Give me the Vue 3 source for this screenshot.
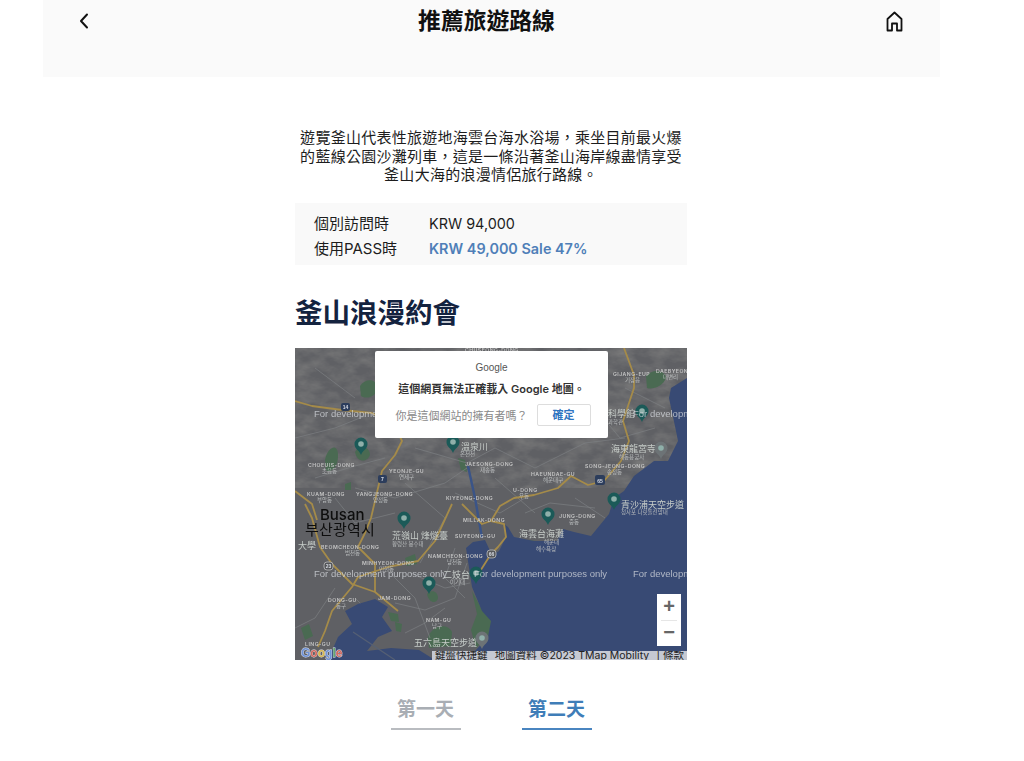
<template>
  <div class="page">
    <header class="top-bar">
      <svg class="icon" width="24" height="24" viewBox="0 0 24 24" fill="none" stroke="#111" stroke-width="2" stroke-linecap="round" stroke-linejoin="round">
        <path d="M15 5.5 L9 12 L15 18.5" />
      </svg>
      <h1 class="title">推薦旅遊路線</h1>
      <svg class="icon" width="24" height="24" viewBox="0 0 24 24" fill="none" stroke="#111" stroke-width="1.8" stroke-linejoin="round">
        <path d="M5.5 10 L12.5 3.5 L19.5 10 V21.5 H15 V14.5 H10 V21.5 H5.5 Z" />
      </svg>
    </header>

    <main class="content">
      <p class="intro">遊覽釜山代表性旅遊地海雲台海水浴場，乘坐目前最火爆的藍線公園沙灘列車，這是一條沿著釜山海岸線盡情享受釜山大海的浪漫情侶旅行路線。</p>

      <div class="price-box">
        <div class="price-row">
          <span class="price-label">個別訪問時</span>
          <span class="price">KRW 94,000</span>
        </div>
        <div class="price-row">
          <span class="price-label">使用PASS時</span>
          <span class="price sale">KRW 49,000 Sale 47%</span>
        </div>
      </div>

      <h2 class="course">釜山浪漫約會</h2>

      <div class="map">
        <svg class="map-bg" width="392" height="312" viewBox="0 0 392 312">
          <defs>
            <filter id="relief" x="0" y="0" width="100%" height="100%">
              <feTurbulence type="fractalNoise" baseFrequency="0.05 0.09" numOctaves="4" seed="7" />
              <feColorMatrix values="0 0 0 0 0.2  0 0 0 0 0.2  0 0 0 0 0.2  1.6 0 0 0 -0.55" />
            </filter>
          </defs>
          <rect width="392" height="312" fill="#5f6064" />
          <rect width="392" height="140" filter="url(#relief)" />

          <!-- 緑地 -->
          <path v-for="(d, i) in greens" :key="i" :d="d" fill="#4a6a52" />

          <!-- 細い道路 -->
          <g fill="none" stroke="#7d7f82" stroke-width="0.7">
            <path v-for="(d, i) in minorRoads" :key="i" :d="d" />
          </g>

          <!-- 海 -->
          <path d="M392 30 L376 40 L374 50 L381 83 L383 93 L373 113 L359 113 L339 128 L329 143 L319 150 L314 166 L296 188 L279 184 L268 181 L262 193 L239 193 L219 189 L213 179 L209 176 L211 189 L204 203 L197 207 L190 192 L178 194 L171 200 L173 213 L177 239 L187 263 L196 273 L193 289 L180 303 L185 312 L392 312 Z" fill="#384a74" />
          <path d="M80 251 L93 259 L87 269 L97 283 L83 289 L72 303 L96 300 L124 302 L140 312 L33 312 L43 289 L57 276 L50 263 L63 256 Z" fill="#384a74" />
          <path d="M58 284 L100 312" fill="none" stroke="#566074" stroke-width="1.2" />
          <path d="M173 118 L180 150 L187 190" fill="none" stroke="#3a5488" stroke-width="2.4" />

          <!-- 幹線道路 -->
          <g fill="none" stroke="#a58b49" stroke-width="1.8" stroke-linejoin="round">
            <path v-for="(d, i) in mainRoads" :key="i" :d="d" />
          </g>

          <g class="shield">
            <rect x="46" y="55" width="9" height="8" rx="2" fill="#2c3d5c" />
            <rect x="83" y="127" width="9" height="8" rx="2" fill="#2c3d5c" />
            <rect x="300" y="127" width="10" height="10" rx="2" fill="#2c3d5c" />
            <rect x="29" y="214" width="9" height="8" rx="3" fill="#55575a" stroke="#c8c8c8" stroke-width="0.7" />
            <rect x="192" y="202" width="9" height="8" rx="3" fill="#55575a" stroke="#c8c8c8" stroke-width="0.7" />
            <text x="50.5" y="61">14</text>
            <text x="87.5" y="133">7</text>
            <text x="305" y="135">65</text>
            <text x="33.5" y="220">23</text>
            <text x="196.5" y="208">66</text>
          </g>

          <g class="district">
            <text v-for="l in districts" :key="l[0]" :x="l[1]" :y="l[2]">{{ l[0] }}</text>
          </g>
          <g class="sub-label">
            <text v-for="l in subLabels" :key="l[0]" :x="l[1]" :y="l[2]">{{ l[0] }}</text>
          </g>
          <g class="poi">
            <text v-for="l in pois" :key="l[0]" :x="l[1]" :y="l[2]">{{ l[0] }}</text>
          </g>

          <text class="city" x="25" y="172">Busan</text>
          <text class="city city-ko" x="10" y="187">부산광역시</text>

          <g v-for="(p, i) in pins" :key="i" :transform="`translate(${p[0]} ${p[1]})`">
            <path d="M0 8 C-1.5 3.5 -6.5 2 -6.5 -3 A6.5 6.5 0 1 1 6.5 -3 C6.5 2 1.5 3.5 0 8 Z" :fill="p[2] || '#1b5a58'" />
            <circle cx="0" cy="-3" r="2.8" fill="#8fb0aa" />
          </g>

          <g class="watermark">
            <text x="19" y="229">For development purposes only</text>
            <text x="179" y="229">For development purposes only</text>
            <text x="338" y="229">For developm</text>
            <text x="19" y="69">For development</text>
            <text x="338" y="69">For developm</text>
          </g>

          <text class="google-mark" x="6" y="309"><tspan fill="#6f93d8">G</tspan><tspan fill="#d56a5e">o</tspan><tspan fill="#d9b94e">o</tspan><tspan fill="#6f93d8">g</tspan><tspan fill="#66a76f">l</tspan><tspan fill="#d56a5e">e</tspan></text>
        </svg>

        <div class="zoom-ctrl">
          <span class="zoom-btn">+</span>
          <span class="zoom-line"></span>
          <span class="zoom-btn">−</span>
        </div>
        <div class="attribution">
          <span>鍵盤快捷鍵</span>
          <span>地圖資料 ©2023 TMap Mobility</span>
          <span>| 條款</span>
        </div>

        <div class="dialog">
          <div class="dialog-logo">Google</div>
          <div class="dialog-msg">這個網頁無法正確載入 Google 地圖。</div>
          <div class="dialog-row">
            <span class="dialog-q">你是這個網站的擁有者嗎？</span>
            <span class="dialog-ok">確定</span>
          </div>
        </div>
      </div>

      <div class="tabs">
        <div class="tab">第一天</div>
        <div class="tab active">第二天</div>
      </div>
    </main>
  </div>
</template>

<script setup>
const greens = [
  'M65 38 C70 30 82 30 82 40 C82 48 72 52 66 48 Z',
  'M30 112 C32 100 42 94 43 106 C44 118 36 126 31 122 Z',
  'M60 104 C64 96 74 98 75 106 C74 114 62 116 60 104 Z',
  'M163 110 L170 112 L172 124 L166 122 Z',
  'M351 28 C358 20 370 22 371 30 C368 38 358 42 352 40 Z',
  'M132 246 C136 241 143 243 143 250 C142 256 134 256 132 246 Z',
  'M93 264 L103 266 L104 274 L96 273 Z',
  'M100 274 L107 276 L106 284 L101 283 Z',
  'M177 243 L186 260 L197 274 L193 288 L181 300 L176 282 L182 266 Z',
  'M133 290 C136 278 152 274 157 284 L156 298 L134 300 Z',
  'M6 280 L14 276 L18 288 L10 292 Z',
  'M110 210 L120 206 L122 216 L112 218 Z',
  'M232 192 L250 194 L244 202 L236 200 Z',
  'M50 136 L56 134 L56 142 L50 142 Z'
]

const mainRoads = [
  'M0 53 L17 58 L47 62 L77 65 L100 78 L107 93 L100 107 L87 123 L83 140 L76 170 L70 185 L63 199 L80 216 L80 244',
  'M10 156 L17 170 L25 199 L37 216 L57 236 L80 244 L103 263',
  'M157 156 L140 193 L123 213 L93 219 L63 229 L57 239 L37 263 L30 283 L23 299',
  'M0 143 L17 156 L22 172',
  'M329 0 L339 27 L339 40 L328 73 L334 93 L326 113 L309 133 L293 137 L276 128 L263 140 L239 147 L219 150 L205 158 L196 173 L209 176 L211 189 L203 199 L196 206 L182 228',
  'M167 156 L187 176 L196 173'
]

const minorRoads = [
  'M60 140 L100 150 L150 135 L172 120',
  'M110 135 L150 170 L125 215',
  'M160 145 L205 165 L230 150',
  'M100 165 L60 175 L40 150',
  'M20 130 L60 118 L90 110',
  'M90 220 L120 250 L135 290',
  'M115 225 L150 240 L175 235',
  'M100 255 L130 262 L160 250 L172 215',
  'M110 285 L130 275 L150 260',
  'M230 165 L255 155 L300 160',
  'M280 150 L310 170',
  'M300 60 L325 90 L360 80',
  'M330 40 L370 60',
  'M120 100 L172 115 L200 100 L240 120',
  'M240 120 L290 95 L330 90',
  'M200 130 L240 165',
  'M0 90 L40 80 L70 68',
  'M20 20 L60 50',
  'M160 200 L150 230 L170 250',
  'M40 240 L20 270 L0 280',
  'M70 260 L60 250'
]

// [text, x, y]
const districts = [
  ['CHOEUIS-DONG', 13, 119],
  ['YEONJE-GU', 94, 125],
  ['KUAM-DONG', 12, 148],
  ['YANGJEONG-DONG', 61, 148],
  ['KIYEONG-DONG', 151, 152],
  ['JAESONG-DONG', 170, 118],
  ['HAEUNDAE-GU', 236, 128],
  ['U-DONG', 218, 144],
  ['SONG-JEONG-DONG', 290, 120],
  ['GIJANG-EUP', 318, 28],
  ['DAEBYEON', 361, 25],
  ['BEOMCHEON-DONG', 26, 201],
  ['MINHYEON-DONG', 67, 217],
  ['NAMCHEON-DONG', 133, 210],
  ['MILLAK-DONG', 168, 174],
  ['SUYEONG-GU', 160, 190],
  ['JUNG-DONG', 264, 170],
  ['DONG-GU', 33, 254],
  ['JAM-DONG', 83, 252],
  ['NAM-GU', 131, 274],
  ['LING-GU', 10, 298],
  ['CHUSEONG-DONG', 170, 4]
]

const subLabels = [
  ['초읍동', 27, 125],
  ['연제구', 104, 131],
  ['부암동', 22, 154],
  ['양정동', 78, 154],
  ['재송동', 185, 124],
  ['해운대구', 248, 134],
  ['우동', 224, 150],
  ['송정동', 312, 126],
  ['기장읍', 330, 34],
  ['대변리', 368, 31],
  ['범천동', 50, 207],
  ['민현동', 84, 223],
  ['남천동', 152, 216],
  ['중동', 274, 176],
  ['동구', 41, 260],
  ['남구', 137, 280],
  ['해운대', 249, 196],
  ['해수욕장', 241, 203],
  ['온천천', 165, 108],
  ['해동용궁사', 324, 111],
  ['과학관', 313, 76],
  ['황령산 봉수대', 97, 198],
  ['이기대', 155, 236],
  ['청사포 다릿돌전망대', 326, 166]
]

const pois = [
  ['溫泉川', 166, 102],
  ['科學館', 313, 69],
  ['海東龍宮寺', 316, 104],
  ['海雲台海灘', 224, 189],
  ['荒嶺山 烽燧臺', 97, 191],
  ['青沙浦天空步道', 326, 160],
  ['二妓台', 148, 230],
  ['五六島天空步道', 119, 298],
  ['大學', 3, 201]
]

// [x, y, color]
const pins = [
  [66, 99],
  [158, 97],
  [347, 66],
  [366, 103, '#6d7376'],
  [109, 173],
  [134, 238],
  [181, 228],
  [253, 169],
  [319, 154],
  [187, 293, '#6d7376']
]
</script>

<style>
html, body {
  background: #fff;
}
</style>

<style scoped>
.page {
  width: 897px;
  height: 761px;
  margin-left: 43px;
  overflow: hidden;
  font-family: Inter, "Noto Sans CJK TC", sans-serif;
  color: #1d1d1d;
}

.top-bar {
  height: 77px;
  background: #fafafa;
  display: flex;
  justify-content: space-between;
  align-items: flex-start;
  padding: 9px 34px 0 29px;
  box-sizing: border-box;
}

.title {
  margin: -1px 5px 0 0;
  font-size: 22.8px;
  line-height: 26px;
  font-weight: 700;
  color: #111;
}

.content {
  width: 392px;
  margin-left: 252px;
  padding-top: 52px;
}

.intro {
  margin: 0 0 18px;
  font-size: 15px;
  line-height: 18.5px;
  letter-spacing: 0.27px;
  text-align: center;
}

.price-box {
  background: #f9f9f9;
  height: 62px;
  padding: 8px 19px 0;
  box-sizing: border-box;
  font-size: 15px;
  line-height: 25px;
}

.price-row {
  display: flex;
}

.price-label {
  width: 115px;
}

.price {
  font-size: 14.4px;
}

.sale {
  color: #4f7fb8;
  font-weight: 600;
}

.course {
  margin: 28px 0 15px;
  font-size: 27.5px;
  line-height: 40px;
  font-weight: 700;
  color: #14233f;
}

.map {
  position: relative;
  width: 392px;
  height: 312px;
  overflow: hidden;
}

.map-bg {
  display: block;
  filter: blur(0.35px);
}

.district {
  font: 600 5.2px Inter, sans-serif;
  fill: #c4c4c4;
  letter-spacing: 0.45px;
}

.sub-label {
  font: 400 5.5px "Noto Sans CJK KR", sans-serif;
  fill: #b9bcbd;
}

.poi {
  font: 400 9px "Noto Sans CJK TC", sans-serif;
  fill: #c6ccc8;
}

.shield {
  font: 700 5px "Liberation Sans", sans-serif;
  fill: #d8dce4;
  text-anchor: middle;
}

.city {
  font: 500 15px Inter, sans-serif;
  fill: #0d0d0d;
}

.city-ko {
  font-family: "Noto Sans CJK KR", sans-serif;
  font-weight: 400;
  letter-spacing: 0.2px;
}

.watermark {
  font: 400 9.5px "Liberation Sans", sans-serif;
  fill: #d8dbe0;
  opacity: 0.75;
}

.google-mark {
  font: 700 12px "Liberation Sans", sans-serif;
  stroke: #dfe3ea;
  stroke-width: 0.8px;
  paint-order: stroke;
}

.zoom-ctrl {
  position: absolute;
  right: 6px;
  top: 246px;
  width: 24px;
  height: 52px;
  background: #fff;
  display: flex;
  flex-direction: column;
  align-items: center;
}

.zoom-btn {
  height: 26px;
  font: 700 20px/24px "Liberation Sans", sans-serif;
  color: #666;
}

.zoom-line {
  width: 16px;
  height: 1px;
  margin-bottom: -1px;
  background: #e6e6e6;
  flex: none;
}

.attribution {
  position: absolute;
  right: 0;
  bottom: 0;
  width: 255px;
  height: 9px;
  padding: 0 3px;
  box-sizing: border-box;
  display: flex;
  justify-content: space-between;
  background: #c5c9d3;
  font: 10.5px/9px Inter, "Noto Sans CJK TC", sans-serif;
  white-space: nowrap;
  color: #222;
  overflow: hidden;
}

.dialog {
  position: absolute;
  left: 80px;
  top: 3px;
  width: 233px;
  height: 87px;
  background: #fff;
  box-sizing: border-box;
  text-align: center;
  border-radius: 2px;
}

.dialog-logo {
  margin-top: 10px;
  font: 10px/14px "Liberation Sans", sans-serif;
  color: #555;
}

.dialog-msg {
  margin-top: 7px;
  font-size: 11px;
  line-height: 15px;
  font-weight: 600;
  color: #333;
}

.dialog-row {
  margin-top: 7px;
  padding-left: 3px;
  display: flex;
  justify-content: center;
  align-items: center;
  gap: 9px;
}

.dialog-q {
  font-size: 11px;
  color: #888;
}

.dialog-ok {
  width: 54px;
  height: 22px;
  border: 1px solid #ddd;
  border-radius: 2px;
  box-sizing: border-box;
  font-size: 11px;
  line-height: 20px;
  color: #2f74c0;
  font-weight: 600;
}

.tabs {
  display: flex;
  justify-content: center;
  gap: 61px;
  margin-top: 34px;
}

.tab {
  width: 70px;
  height: 36px;
  box-sizing: border-box;
  border-bottom: 2px solid #b9bcc0;
  font-size: 19px;
  line-height: 32px;
  font-weight: 600;
  text-align: center;
  color: #a9aeb4;
}

.tab.active {
  border-bottom-color: #4a85c0;
  color: #3f7db8;
}
</style>
